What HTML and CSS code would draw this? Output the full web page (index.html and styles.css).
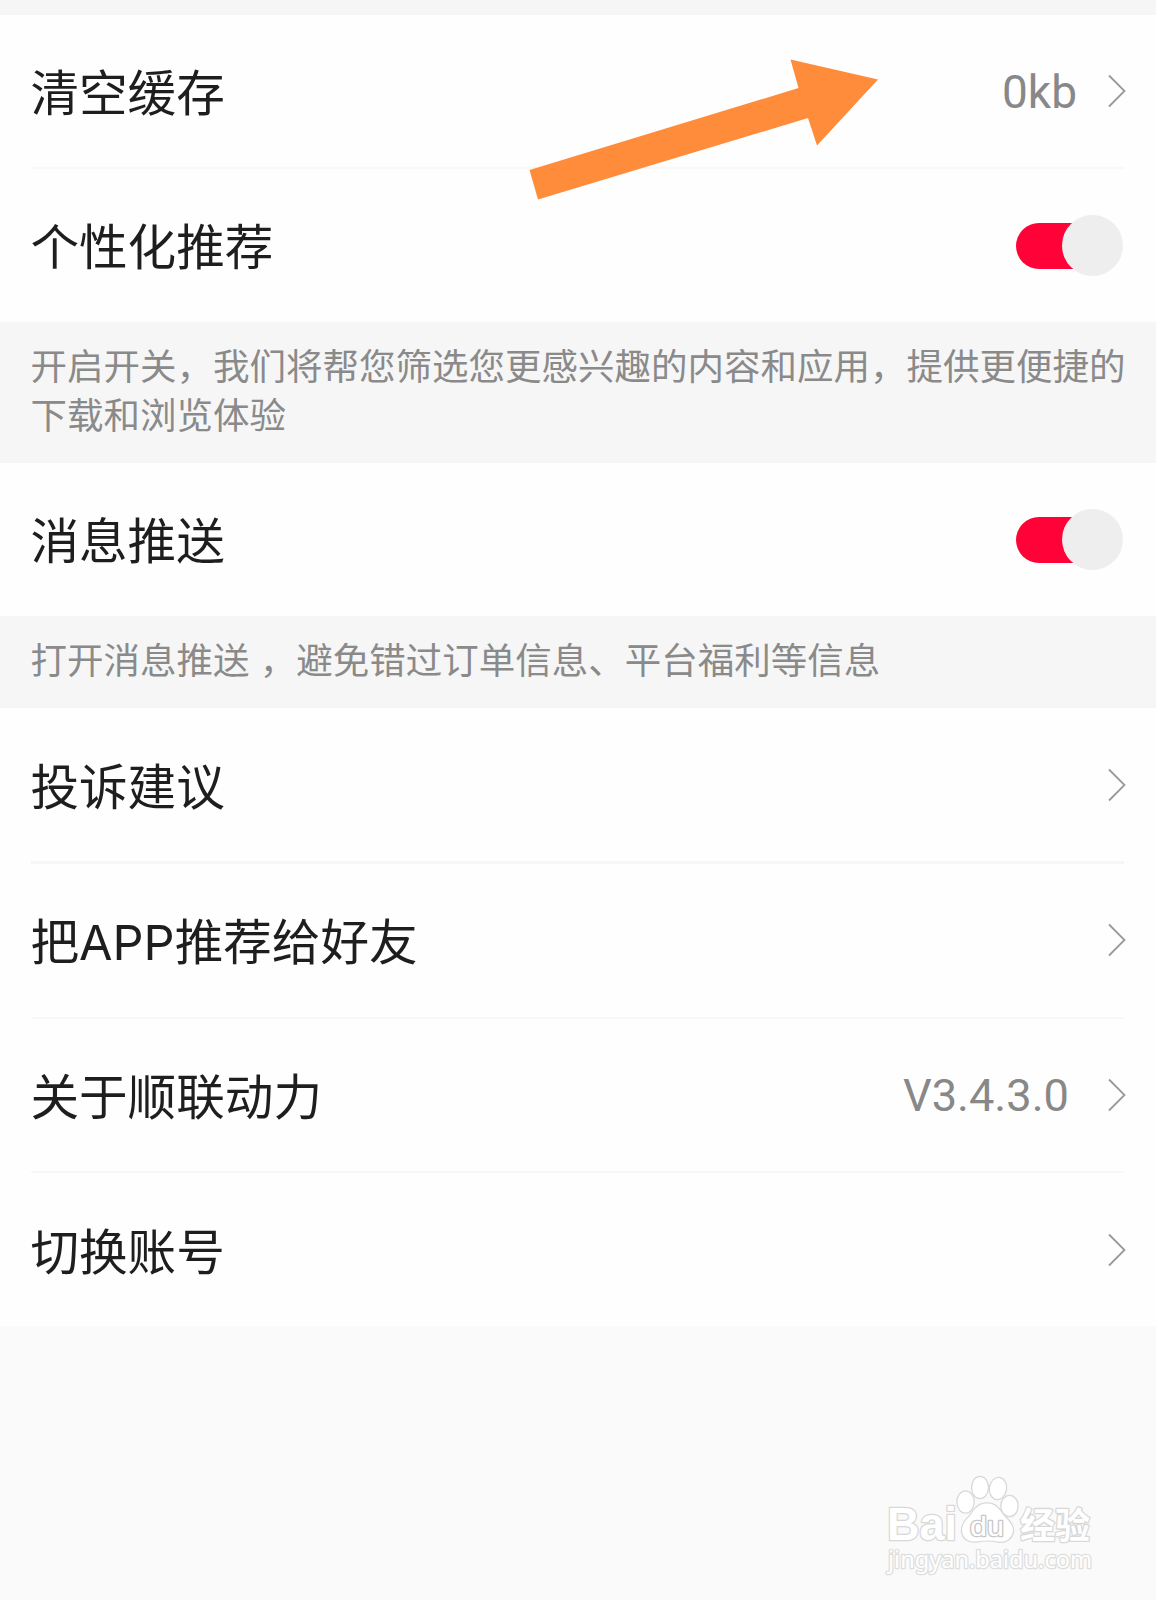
FILE: index.html
```html
<!DOCTYPE html>
<html lang="zh-CN">
<head>
    <meta charset="UTF-8">
    <meta name="viewport" content="width=device-width, initial-scale=1.0">
    <title>设置</title>
    <link rel="stylesheet" href="styles.css">
</head>
<body>
    <div class="settings">
        <div class="group">
            <div class="row">
                <span class="label">清空缓存</span>
                <span class="value">0kb</span>
                <svg class="chevron" viewBox="0 0 18 34"><path d="M1 1.5 L16.5 17 L1 32.5"/></svg>
            </div>
            <div class="row">
                <span class="label">个性化推荐</span>
                <div class="switch"><div class="knob"></div></div>
            </div>
        </div>
        <p class="note">开启开关，我们将帮您筛选您更感兴趣的内容和应用，提供更便捷的下载和浏览体验</p>

        <div class="group">
            <div class="row">
                <span class="label">消息推送</span>
                <div class="switch"><div class="knob"></div></div>
            </div>
        </div>
        <p class="note">打开消息推送 ，避免错过订单信息、平台福利等信息</p>

        <div class="group">
            <div class="row thick">
                <span class="label">投诉建议</span>
                <svg class="chevron" viewBox="0 0 18 34"><path d="M1 1.5 L16.5 17 L1 32.5"/></svg>
            </div>
            <div class="row">
                <span class="label">把<span class="latin">APP</span>推荐给好友</span>
                <svg class="chevron" viewBox="0 0 18 34"><path d="M1 1.5 L16.5 17 L1 32.5"/></svg>
            </div>
            <div class="row">
                <span class="label">关于顺联动力</span>
                <span class="value version">V3.4.3.0</span>
                <svg class="chevron" viewBox="0 0 18 34"><path d="M1 1.5 L16.5 17 L1 32.5"/></svg>
            </div>
            <div class="row">
                <span class="label">切换账号</span>
                <svg class="chevron" viewBox="0 0 18 34"><path d="M1 1.5 L16.5 17 L1 32.5"/></svg>
            </div>
        </div>
    </div>

    <svg class="arrow" viewBox="0 0 350 142">
        <polygon points="1.5,112 270.5,30 262.5,1.5 350,21.5 289,87.5 280,60 10,141.5"/>
    </svg>

    <svg class="watermark" viewBox="0 0 260 150">
        <g class="mark">
            <text class="logo" x="27" y="90" textLength="70" lengthAdjust="spacingAndGlyphs">Bai</text>
            <ellipse cx="105.5" cy="52" rx="8" ry="10.5"/>
            <ellipse cx="120" cy="37.5" rx="7.8" ry="10.5"/>
            <ellipse cx="138" cy="38.5" rx="8" ry="10.5" transform="rotate(8 138 38.5)"/>
            <ellipse cx="149.5" cy="56" rx="8" ry="10"/>
            <path d="M127 53.5 C117 53.5 114 61 109 67 C104 72 102 76 102 81 C103 89 109 92 116 91.5 C123 90 131 90 138 91.5 C146 93 152 88 153 81 C153 75 149 71 145 67 C140 61 137 53.5 127 53.5 Z"/>
            <text class="du" x="110" y="86" textLength="34" lengthAdjust="spacingAndGlyphs">du</text>
            <text class="cn" x="160" y="88.5" textLength="70" lengthAdjust="spacingAndGlyphs">经验</text>
            <text class="url" x="28" y="118" textLength="204" lengthAdjust="spacingAndGlyphs">jingyan.baidu.com</text>
        </g>
    </svg>
</body>
</html>
```

FILE: styles.css
```css
body {
    margin: 0;
    height: 1600px;
    position: relative;
    overflow: hidden;
    background-color: #fafafa;
    font-family: "Noto Sans CJK SC", sans-serif;
    color: #1e1e1e;
}
.settings {
    padding-top: 15px;
    background-color: #f6f6f6;
}
.group {
    background-color: #fefefe;
    padding: 0 32px 0 31px;
}
.row {
    display: flex;
    align-items: center;
    box-sizing: border-box;
    height: 154.5px;
    border-bottom: 2px solid #f8f8f8;
}
.row:first-child:not(.thick) {
    height: 154px;
}
.row.thick {
    height: 156px;
    border-bottom: 3px solid #f6f6f6;
}
.row:last-child {
    height: 153px !important;
    border-bottom: none;
}
.label {
    flex: 1;
    margin-left: -0.6px;
    font-size: 48.6px;
    line-height: 60px;
    padding-bottom: 3px;
}
.latin {
    font-family: Inter, sans-serif;
    line-height: 1;
}
.value {
    font-family: Roboto, sans-serif;
    font-size: 46px;
    color: #888;
    margin-right: 31px;
    padding-top: 2px;
}
.version {
    font-size: 45.2px;
    margin-right: 39px;
}
.chevron {
    width: 18px;
    height: 34px;
    margin-right: -2px;
    fill: none;
    stroke: #999;
    stroke-width: 1.8;
}
.switch {
    width: 100px;
    height: 46px;
    margin-right: 8px;
    border-radius: 23px;
    background-color: #ff0338;
    display: flex;
    align-items: center;
    justify-content: flex-end;
}
.knob {
    flex: none;
    width: 61px;
    height: 61px;
    margin-right: -7px;
    border-radius: 50%;
    background-color: #eeeeee;
}
.note {
    margin: 0;
    padding: 18px 24px 25px 30.5px;
    font-size: 36.5px;
    line-height: 49px;
    color: #8a8a8a;
    word-spacing: 2px;
}
.group:last-child .label {
    padding-bottom: 2px;
}

/* arrow over the first row */
.arrow {
    position: absolute;
    left: 528px;
    top: 57.5px;
    width: 350px;
    height: 142px;
    fill: #ff8c3a;
}

.watermark {
    position: absolute;
    left: 860px;
    top: 1450px;
    width: 260px;
    height: 150px;
}
.mark {
    fill: #fff;
    stroke: #d8d8d8;
    stroke-width: 2.6;
    stroke-linejoin: round;
    paint-order: stroke;
    font-family: "Liberation Sans", Arial, sans-serif;
}
.logo {
    font-size: 46px;
    font-weight: bold;
}
.du {
    font-size: 28px;
    stroke: #c8c8c8;
}
.cn {
    font-family: "Noto Sans CJK SC", sans-serif;
    font-size: 36px;
    font-weight: bold;
}
.url {
    font-family: "Noto Sans", sans-serif;
    font-size: 23px;
    stroke: #dedede;
}
```
